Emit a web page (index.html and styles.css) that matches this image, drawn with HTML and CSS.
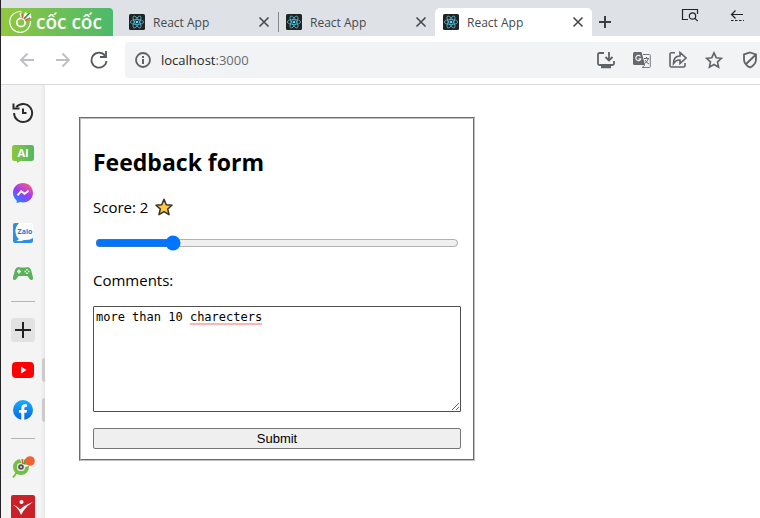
FILE: index.html
```html
<!DOCTYPE html>
<html lang="en">
<head>
<meta charset="utf-8">
<title>React App</title>
<link rel="stylesheet" href="styles.css">
</head>
<body>
<svg class="defs" aria-hidden="true">
  <symbol id="react" viewBox="0 0 16 16">
    <rect width="16" height="16" rx="1.5" fill="#222"/>
    <g fill="none" stroke="#53b9d3" stroke-width=".8">
      <ellipse cx="8" cy="8" rx="6.7" ry="2.5"/>
      <ellipse cx="8" cy="8" rx="6.7" ry="2.5" transform="rotate(60 8 8)"/>
      <ellipse cx="8" cy="8" rx="6.7" ry="2.5" transform="rotate(120 8 8)"/>
    </g>
    <circle cx="8" cy="8" r="1.3" fill="#61dafb"/>
  </symbol>
  <symbol id="close" viewBox="0 0 12 12"><path d="M1.5 1.5l9 9M10.5 1.5l-9 9" fill="none" stroke="#45494d" stroke-width="1.6"/></symbol>
</svg>

<header class="tabbar">
  <a class="brand" href="#">
    <svg width="24" height="24" viewBox="0 0 24 24">
      <path d="M12.500 1.600A10.400 10.400 0 1 0 21.500 11" fill="none" stroke="#fff" stroke-width="1.200"/>
      <circle cx="12" cy="12.500" r="4.200" fill="none" stroke="#fff" stroke-width="1.800"/>
      <path d="M11.500 3l2 5.500" stroke="#fff" stroke-width="2.500"/>
      <path d="M13 3.500l.5 5" stroke="#f0563a" stroke-width="1.600"/>
      <path d="M14 8.500l2-6.500 3 1.500z" fill="#fff"/>
      <path d="M15 10l6.500-7 1 5z" fill="#fff"/>
      <path d="M15 9L20.500 3" stroke="#2b9b4b" stroke-width="1.300"/>
      <path d="M16 10.500L21 8" stroke="#f0563a" stroke-width="1.600"/>
    </svg>
    <span>cốc cốc</span>
  </a>
  <nav class="tabs">
    <div class="tab"><svg class="i16"><use href="#react"/></svg><a href="#">React App</a><button aria-label="Close tab"><svg class="i12"><use href="#close"/></svg></button></div>
    <div class="tab divided"><svg class="i16"><use href="#react"/></svg><a href="#">React App</a><button aria-label="Close tab"><svg class="i12"><use href="#close"/></svg></button></div>
    <div class="tab active"><svg class="i16"><use href="#react"/></svg><a href="#">React App</a><button aria-label="Close tab"><svg class="i12"><use href="#close"/></svg></button></div>
  </nav>
  <button class="new-tab" aria-label="New tab"><svg width="12" height="12" viewBox="0 0 12 12"><path d="M6 0v12M0 6h12" stroke="#3c4043" stroke-width="2"/></svg></button>
  <div class="window-tools">
    <button aria-label="Search tabs"><svg width="18" height="14" viewBox="0 0 18 14" fill="none" stroke="#222" stroke-width="1.200"><path d="M7 11.500H1.500V1.500h15V6"/><circle cx="11.500" cy="8" r="3.200"/><path d="M13.700 10.200l3 3"/></svg></button>
    <button aria-label="Restore"><svg width="14" height="14" viewBox="0 0 14 14" fill="none" stroke="#222" stroke-width="1.200"><path d="M13 6.500H1.500M5.500 2.500l-4 4 4 4"/><path d="M1 12.500h13" stroke-dasharray="2.500 1.500"/></svg></button>
  </div>
</header>

<div class="toolbar">
  <div class="nav">
    <button aria-label="Back"><svg width="16" height="16" viewBox="0 0 16 16" fill="none" stroke="#bdbfc2" stroke-width="1.800"><path d="M15 8H2.500M8.500 1.500L2 8l6.500 6.500"/></svg></button>
    <button aria-label="Forward"><svg width="16" height="16" viewBox="0 0 16 16" fill="none" stroke="#bdbfc2" stroke-width="1.800"><path d="M1 8h12.500M7.500 1.500L14 8l-6.500 6.500"/></svg></button>
    <button aria-label="Reload"><svg width="18" height="18" viewBox="0 0 18 18" fill="none" stroke="#55595e" stroke-width="1.800"><path d="M15 4.600A7.500 7.500 0 1 0 16.500 10"/><path d="M16 0v6h-6"/></svg></button>
  </div>
  <div class="omnibox">
    <svg width="16" height="16" viewBox="0 0 16 16"><circle cx="8" cy="8" r="7" fill="none" stroke="#5f6368" stroke-width="1.800"/><path d="M8 7v5M8 4v2" stroke="#5f6368" stroke-width="2"/></svg>
    <a class="url" href="#">localhost<span>:3000</span></a>
    <div class="actions">
      <button aria-label="Install"><svg width="18" height="18" viewBox="0 0 18 18" fill="none" stroke="#5f6368" stroke-width="1.800"><path d="M7 2H2.500Q1 2 1 3.500v9Q1 14 2.500 14h13q1.500 0 1.500-1.500V10"/><path d="M12 1v8M8.500 6l3.500 3.500L15.500 6"/><path d="M4 16h10" stroke-width="2.500"/></svg></button>
      <button aria-label="Translate"><svg width="18" height="18" viewBox="0 0 18 18"><path d="M1.500 1h7l3.500 13H1.500Q0 14 0 12.500v-10Q0 1 1.500 1z" fill="#65696e"/><path d="M7.500 5.500a2.600 2.600 0 1 0 .4 2.300H5.500" fill="none" stroke="#f1f3f4" stroke-width="1.200"/><path d="M10 3.500h6.500q.8 0 .8.800v11.400q0 .8-.8.800H9L12 14" fill="none" stroke="#777b80"/><path d="M11 7.500h5M13.500 6v1.500M15.500 7.500q-1 3.500-4 5M12 9q1.500 3 4 4" fill="none" stroke="#65696e"/></svg></button>
      <button aria-label="Share"><svg width="18" height="18" viewBox="0 0 18 18" fill="none" stroke="#5f6368" stroke-width="1.600"><path d="M6 1.800H2.500Q1 1.800 1 3.300v11.200Q1 16 2.500 16h12q1.500 0 1.500-1.500V12"/><path d="M4.500 12.500Q4.500 5 11 5V1.500L17 7l-6 5.500V9Q7 8.500 4.500 12.500z"/></svg></button>
      <button aria-label="Bookmark"><svg width="18" height="18" viewBox="0 0 18 18"><path d="M9 1.800l2.200 4.900 5.200.6-3.900 3.600 1.100 5.300L9 13.500l-4.600 2.700 1.100-5.300-3.900-3.600 5.200-.6z" fill="none" stroke="#5f6368" stroke-width="1.600"/></svg></button>
      <button aria-label="Shield"><svg width="18" height="18" viewBox="0 0 18 18" fill="none" stroke="#5f6368" stroke-width="1.800"><path d="M9 1.500l6 2v5q0 5-6 8-6-3-6-8v-5zM4.500 13.500L14.500 4"/></svg></button>
    </div>
  </div>
</div>

<div class="content">
  <aside class="sidebar">
    <button aria-label="History"><svg width="22" height="22" viewBox="0 0 22 22" fill="none" stroke="#2b2b2b" stroke-width="2"><path d="M4.200 5.200A9 9 0 1 1 2.100 11"/><path d="M1.500 1.500v5h6"/><path d="M11 6.500V11h3.500"/></svg></button>
    <button aria-label="AI chat"><svg width="22" height="20" viewBox="0 0 22 20"><defs><linearGradient id="ai"><stop stop-color="#8cc63e"/><stop offset="1" stop-color="#4fb965"/></linearGradient></defs><path d="M2.500 2h17Q22 2 22 4.500v11q0 2.500-2.500 2.500H8.500L5 20v-2H2.500Q0 18 0 15.500v-11Q0 2 2.500 2z" fill="url(#ai)"/><text class="ai" x="11" y="14" text-anchor="middle">AI</text></svg></button>
    <button aria-label="Messenger"><svg width="20" height="20" viewBox="0 0 20 20"><defs><linearGradient id="ms" x1=".2" y1="1" x2=".8" y2="0"><stop stop-color="#168fff"/><stop offset=".5" stop-color="#9b38ff"/><stop offset="1" stop-color="#ff5f78"/></linearGradient></defs><path d="M10 0c5.700 0 10 4.100 10 9.700s-4.300 9.700-10 9.700q-1.500 0-2.800-.4L3.800 20l-.3-2.700Q0 14.500 0 9.700C0 4.100 4.300 0 10 0z" fill="url(#ms)"/><path d="M4.500 12.300l3.700-4.200 3.400 2.700 4-3" fill="none" stroke="#fff" stroke-width="2"/></svg></button>
    <button aria-label="Zalo"><svg width="20" height="20" viewBox="0 0 20 20"><rect width="20" height="20" rx="2.500" fill="#fff"/><path d="M6 0Q2 4 2.500 9T6 16l-2.500 2q6 .5 7.500-1 6 .5 9-2v3q0 2-2 2H2q-2 0-2-2V2Q0 0 2 0z" fill="#2f8ede"/><text class="zalo" x="12" y="11" text-anchor="middle">Zalo</text></svg></button>
    <button aria-label="Games"><svg width="20" height="15" viewBox="0 0 20 15"><path d="M4 1.500Q5.500.500 7 1.500h6q1.500-1 3 0 2 1 2.500 4L20 11.500q.3 2.800-1.800 2.500-1.200-.2-3.700-4h-9q-2.500 3.800-3.700 4Q-.3 14.300 0 11.500L1.500 5.500Q2 2.500 4 1.500z" fill="#5bb15b"/><path d="M6 3.500v4M4 5.500h4" stroke="#fff" stroke-width="1.400"/><path d="M14 3v1.500M14 6.500V8M11.500 5.500H13M15 5.500h1.500" stroke="#fff" stroke-width="1.400"/></svg></button>
    <hr>
    <button aria-label="Add"><span class="add"><svg width="16" height="16" viewBox="0 0 16 16"><path d="M8 0v16M0 8h16" stroke="#222" stroke-width="2"/></svg></span></button>
    <button class="open" aria-label="YouTube"><svg width="22" height="16" viewBox="0 0 22 16"><rect width="22" height="16" rx="4" fill="#f00"/><path d="M9 4.500v7l5.500-3.500z" fill="#fff"/></svg></button>
    <button class="open" aria-label="Facebook"><svg width="20" height="20" viewBox="0 0 20 20"><defs><linearGradient id="fb" x2="0" y2="1"><stop stop-color="#18acfe"/><stop offset="1" stop-color="#0866e0"/></linearGradient></defs><circle cx="10" cy="10" r="10" fill="url(#fb)"/><path d="M8.300 20v-7.200H6V10h2.300V8q0-3.800 3.700-3.800 1.200 0 2 .2v2.400h-1.200q-1.500 0-1.500 1.500V10H14l-.5 2.800h-2.200V20z" fill="#fff"/></svg></button>
    <hr>
    <button aria-label="Coc Coc points"><svg width="24" height="24" viewBox="0 0 24 24"><path d="M6.500 16.500L2 22.500" stroke="#83c341" stroke-width="2"/><circle cx="10" cy="12" r="6" fill="none" stroke="#72bf44" stroke-width="4"/><circle cx="10" cy="12" r="4" fill="#e8e8e8"/><circle cx="10" cy="12" r="2.800" fill="#555"/><circle cx="10" cy="12" r="1" fill="#ddd"/><path d="M10 3l2.500 5.500" stroke="#fff" stroke-width="3"/><path d="M11 4l1 5" stroke="#e94b35" stroke-width="1.500"/><path d="M13 9l2-5" stroke="#40a84b" stroke-width="2"/><path d="M14 11l6-2" stroke="#fff" stroke-width="2"/><circle cx="19" cy="6" r="4.800" fill="#f26034"/></svg></button>
    <button aria-label="Shop"><svg width="24" height="24" viewBox="0 0 24 24"><rect width="24" height="24" rx="2" fill="#cb2027"/><circle cx="10.500" cy="7" r="2" fill="#fff"/><path d="M2 10q4 .5 7 4.500 5-5 13-7.500-8 5-12 13Q7.500 12.500 2 10z" fill="#fff"/></svg></button>
  </aside>

  <main>
    <form>
      <fieldset>
        <h2>Feedback form</h2>
        <label class="score" for="score">Score: 2 <svg width="20" height="22" viewBox="0 0 20 22"><path d="M10 3.300l2.300 5.400 5.700.5-4.300 3.800 1.300 5.700-5-3-5 3 1.300-5.700L2 9.200l5.700-.5z" fill="#ffc83d" stroke="#303030" stroke-width="1.500" stroke-linejoin="round"/></svg></label>
        <input id="score" type="range" min="0" max="10" value="2">
        <label class="comments" for="comments">Comments:</label>
        <div class="editor">
          <textarea id="comments" spellcheck="false">more than 10 charecters</textarea>
          <span class="misspelled"></span>
        </div>
        <button class="submit" type="submit">Submit</button>
      </fieldset>
    </form>
  </main>
</div>
</body>
</html>
```
FILE: styles.css
```css
* { box-sizing: border-box; }

body {
  display: flex;
  flex-direction: column;
  height: 100vh;
  margin: 0;
  overflow: hidden;
  border-left: 1px solid #242428;
  background: #fff;
  color: #000;
  font-family: "Open Sans", "Noto Sans", sans-serif;
}

a { color: inherit; text-decoration: none; }
svg { display: block; flex: none; }
.defs { position: absolute; width: 0; height: 0; }
.i16 { width: 16px; height: 16px; }
.i12 { width: 12px; height: 12px; }

button {
  display: flex;
  align-items: center;
  justify-content: center;
  padding: 0;
  border: 0;
  background: none;
}

/* Tab strip */
.tabbar {
  display: flex;
  flex: none;
  height: 36px;
  padding-top: 8px;
  background: #dee1e6;
}

.brand {
  display: flex;
  align-items: center;
  gap: 3px;
  width: 112px;
  margin-right: 8px;
  padding-left: 8px;
  border-radius: 0 4px 0 0;
  background: linear-gradient(90deg, #91c73e, #4cb96b);
  color: #fff;
  font: 600 19px/28px "Open Sans", sans-serif;
  white-space: nowrap;
}

.tabs { display: flex; }

.tab {
  position: relative;
  display: flex;
  align-items: center;
  gap: 8px;
  width: 157px;
  padding: 0 8px;
  color: #45494d;
  font-size: 12px;
}

.tab a { flex: 1; }

.divided::before {
  position: absolute;
  top: 4px;
  left: 0;
  width: 1px;
  height: 20px;
  background: #85888d;
  content: "";
}

.active { border-radius: 5px 5px 0 0; background: #fff; }
.new-tab { width: 26px; }

.window-tools {
  display: flex;
  align-items: flex-start;
  gap: 31px;
  margin-left: auto;
  padding-right: 16px;
}

/* Toolbar */
.toolbar {
  display: flex;
  flex: none;
  height: 49px;
  padding: 6px 0;
  border-bottom: 1px solid #d9dadc;
}

.nav { display: flex; width: 124px; padding-left: 8px; }
.nav button { width: 36px; }

.omnibox {
  display: flex;
  flex: 1;
  align-items: center;
  gap: 10px;
  margin-right: -8px;
  padding-left: 10px;
  border-radius: 4px 0 0 4px;
  background: #f1f3f4;
}

.url { color: #25282b; font-size: 13px; }
.url span { color: #686c70; }
.actions { display: flex; margin-left: auto; }
.actions button { width: 36px; height: 36px; }

/* Side panel */
.content { display: flex; flex: 1; min-height: 0; }

.sidebar {
  width: 44px;
  flex: none;
  padding-top: 8px;
  overflow: hidden;
  background: linear-gradient(90deg, #f4f4f4 90%, #e8e8e8);
}

.sidebar button { position: relative; width: 100%; height: 40px; }

.sidebar hr {
  width: 24px;
  height: 1px;
  margin: 8px auto;
  border: 0;
  background: #b5b5b5;
}

.add { padding: 4px; border-radius: 3px; background: #e2e2e2; }

.open::after {
  position: absolute;
  top: 8px;
  right: 0;
  width: 3px;
  height: 24px;
  border-radius: 3px 0 0 3px;
  background: #cbcbcb;
  content: "";
}

.ai { fill: #fff; font: 700 11px "Open Sans", sans-serif; }
.zalo { fill: #2278c8; font: 700 7px "Open Sans", sans-serif; }

/* Feedback form */
main { flex: 1; padding: 32px 34px; }
form { max-width: 396px; }

fieldset {
  display: flex;
  flex-direction: column;
  min-width: 0;
  margin: 0;
  padding: 27px 12px 10px;
  border: 2px groove #c0c0c0;
}

h2 { margin: 0 0 18px; font-size: 23px; font-weight: 700; line-height: 32px; }
label { font-size: 15px; line-height: 22px; }
.score { display: flex; gap: 6px; margin-bottom: 17px; }
input { height: 16px; margin: 0 2px 18px; }
.comments { margin-bottom: 15px; }
.editor { position: relative; font: 12px/16px "DejaVu Sans Mono", monospace; }

textarea {
  display: block;
  width: 100%;
  height: 106px;
  padding: 2px;
  border: 1px solid #4f4f4f;
  border-radius: 1px;
  color: #000;
  font: inherit;
}

.misspelled {
  position: absolute;
  top: 17px;
  left: calc(13ch + 3px);
  width: 10ch;
  height: 2px;
  background: #ffb4b4;
}

.submit {
  height: 21px;
  margin-top: 16px;
  border: 1px solid #767676;
  border-radius: 2px;
  background: #efefef;
  color: #000;
  font: 13px/19px "Liberation Sans", sans-serif;
}
```
